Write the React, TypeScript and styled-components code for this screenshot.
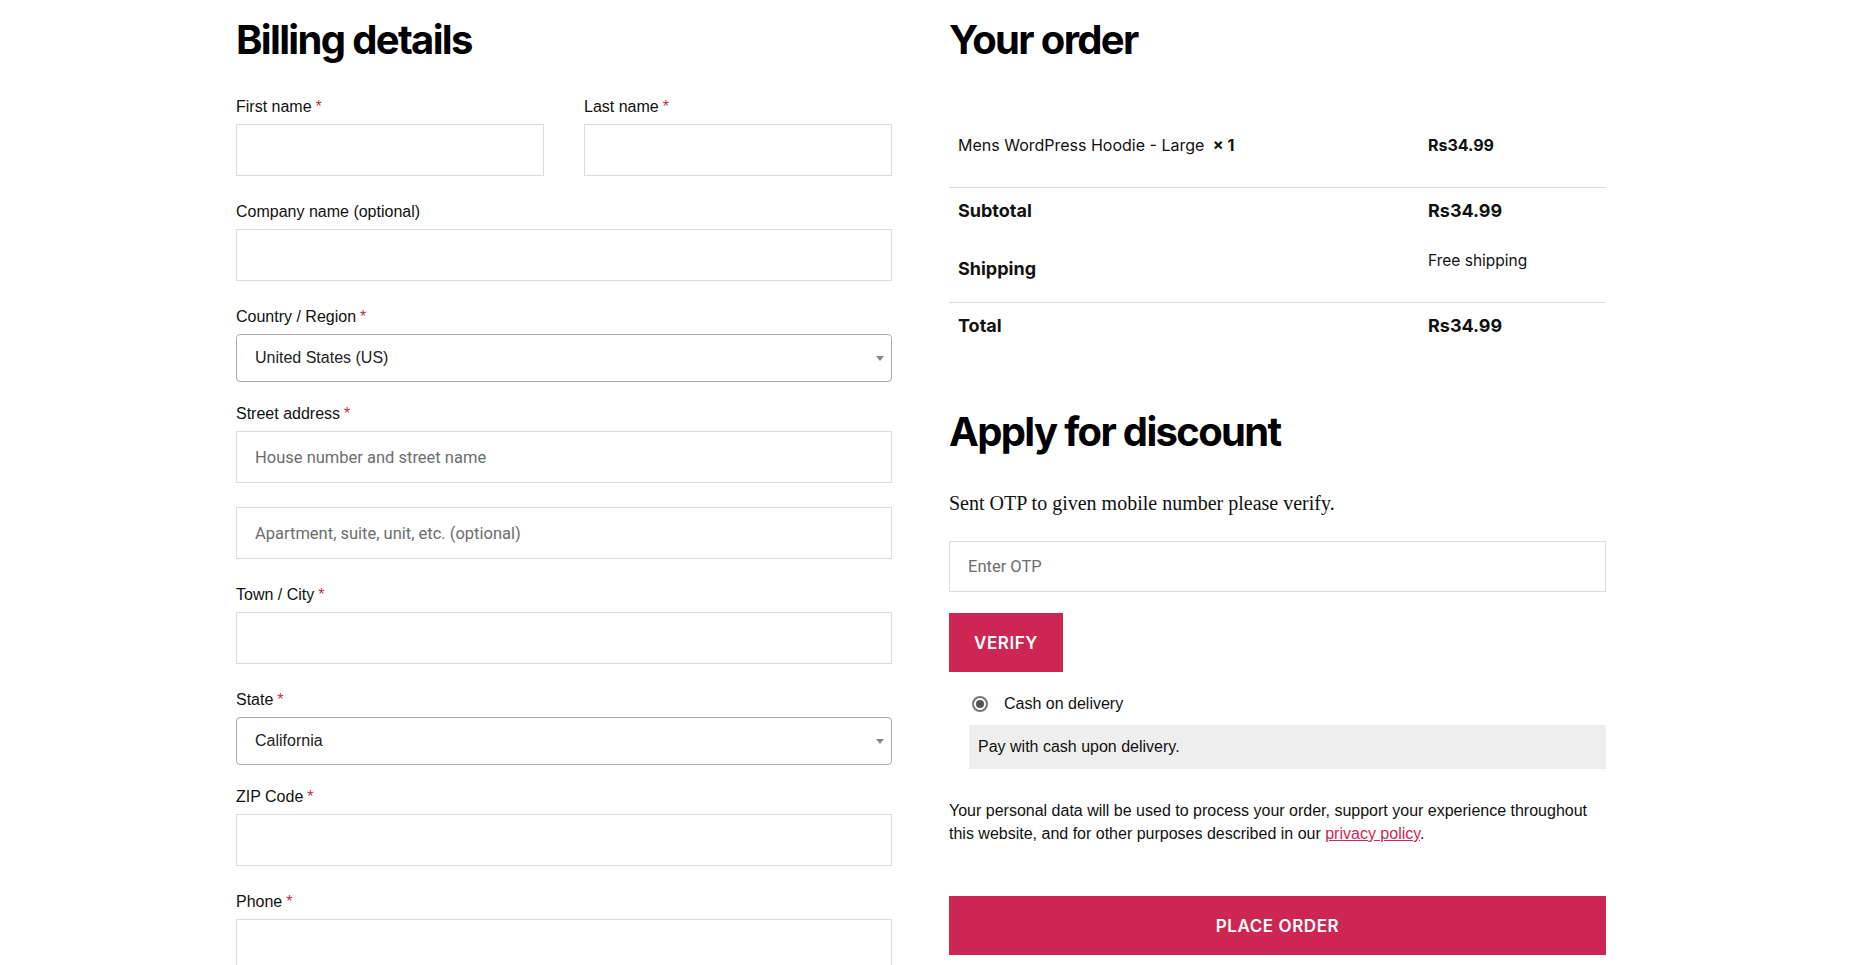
import React from "react";
import styled, { createGlobalStyle } from "styled-components";

const GlobalStyle = createGlobalStyle`
  html, body {
    margin: 0;
    padding: 0;
    background: #fff;
    overflow: hidden;
  }
  body {
    font-family: "Liberation Sans", Arial, sans-serif;
    color: #000;
  }
  * {
    box-sizing: border-box;
  }
`;

const ACCENT = "#cd2653";

const Page = styled.div`
  display: grid;
  grid-template-columns: 656px 657px;
  column-gap: 57px;
  align-items: start;
  padding: 16px 0 0 236px;
`;

const Column = styled.section`
  display: flex;
  flex-direction: column;
`;

const Heading = styled.h2<{ $top?: number }>`
  margin: ${(p) => p.$top || 0}px 0 0;
  font-family: Inter, "Liberation Sans", sans-serif;
  font-weight: 700;
  font-size: 40px;
  line-height: 48px;
  letter-spacing: -0.0415em;
  color: #000;
`;

const BillingForm = styled.div`
  margin-top: 31px;
`;

const NameGrid = styled.div`
  display: grid;
  grid-template-columns: 1fr 1fr;
  column-gap: 40px;
`;

const FieldRow = styled.div<{ $select?: boolean }>`
  margin-bottom: ${(p) => (p.$select ? 20 : 24)}px;
`;

const Label = styled.label`
  display: block;
  font-size: 16px;
  line-height: 24px;
  margin-bottom: 5px;
  color: #111;
`;

const Required = styled.span`
  color: #b3343f;
  margin-left: 4px;
`;

const TextField = styled.input<{ $stacked?: boolean }>`
  display: block;
  width: 100%;
  height: 52px;
  margin-top: ${(p) => (p.$stacked ? 24 : 0)}px;
  padding: 0 18px;
  border: 1px solid #dcdcdc;
  border-radius: 0;
  background: #fff;
  font-family: Roboto, "Liberation Sans", sans-serif;
  font-size: 16.5px;
  color: #111;
  outline: none;
  &::placeholder {
    color: #6d6d6d;
  }
`;

const SelectBox = styled.div`
  display: flex;
  align-items: center;
  justify-content: space-between;
  height: 48px;
  padding: 0 7px 0 18px;
  border: 1px solid #aaa;
  border-radius: 4px;
  font-size: 16px;
  color: #222;
`;

const Caret = styled.span`
  width: 0;
  height: 0;
  border-left: 4px solid transparent;
  border-right: 4px solid transparent;
  border-top: 5px solid #888;
`;

const OrderTable = styled.div`
  margin-top: 39px;
  font-family: Inter, "Liberation Sans", sans-serif;
  color: #111;
`;

const OrderRow = styled.div<{ $pad: string; $divider?: boolean; $height?: number }>`
  display: grid;
  grid-template-columns: 470px 1fr;
  padding: ${(p) => p.$pad};
  min-height: ${(p) => (p.$height ? `${p.$height}px` : "auto")};
  border-bottom: ${(p) => (p.$divider ? "1px solid #dcdcdc" : "none")};
  line-height: 24px;
`;

const Cell = styled.div<{ $bold?: boolean; $size?: number; $align?: string; $padTop?: number }>`
  padding: ${(p) => p.$padTop || 0}px 9px 0;
  font-size: ${(p) => p.$size || 16}px;
  font-weight: ${(p) => (p.$bold ? 700 : 400)};
  align-self: ${(p) => p.$align || "start"};
  white-space: nowrap;
`;

const Qty = styled.strong`
  font-weight: 700;
  margin-left: 4px;
`;

const OtpNote = styled.p`
  margin: 33px 0 0;
  font-family: "Liberation Serif", "Times New Roman", serif;
  font-size: 20px;
  line-height: 28px;
  color: #111;
`;

const OtpInput = styled(TextField)`
  height: 51px;
  margin-top: 24px;
`;

const Button = styled.button<{ $block?: boolean; $top: number }>`
  display: block;
  width: ${(p) => (p.$block ? "100%" : "auto")};
  height: 59px;
  margin-top: ${(p) => p.$top}px;
  padding: 0 25px;
  align-self: flex-start;
  border: none;
  background: ${ACCENT};
  color: #fff;
  font-family: Inter, "Liberation Sans", sans-serif;
  font-size: 17px;
  font-weight: 600;
  letter-spacing: 0.0333em;
  text-transform: uppercase;
  cursor: pointer;
`;

const PaymentOption = styled.label`
  display: flex;
  align-items: center;
  gap: 16px;
  margin-top: 20px;
  padding-left: 23px;
  font-size: 16px;
  line-height: 24px;
  color: #111;
`;

const Radio = styled.span`
  display: flex;
  align-items: center;
  justify-content: center;
  width: 16px;
  height: 16px;
  border-radius: 50%;
  border: 2px solid #767676;
  background: #fff;
  &::after {
    content: "";
    width: 8px;
    height: 8px;
    border-radius: 50%;
    background: #555;
  }
`;

const PayBox = styled.div`
  margin: 9px 0 0 20px;
  padding: 10px 9px;
  background: #eee;
  font-size: 16px;
  line-height: 24px;
  color: #111;
`;

const Privacy = styled.p`
  margin: 30px 0 0;
  font-size: 16px;
  line-height: 23px;
  color: #111;
`;

const PolicyLink = styled.a`
  color: ${ACCENT};
  text-decoration: underline;
`;

type Field = {
  label: string;
  required?: boolean;
  placeholder?: string;
  select?: string;
  extra?: string;
};

const fields: Field[] = [
  { label: "Company name (optional)" },
  { label: "Country / Region", required: true, select: "United States (US)" },
  {
    label: "Street address",
    required: true,
    placeholder: "House number and street name",
    extra: "Apartment, suite, unit, etc. (optional)",
  },
  { label: "Town / City", required: true },
  { label: "State", required: true, select: "California" },
  { label: "ZIP Code", required: true },
  { label: "Phone", required: true },
];

const FieldLabel = ({ label, required }: { label: string; required?: boolean }) => (
  <Label>
    {label}
    {required && <Required>*</Required>}
  </Label>
);

export default function App() {
  return (
    <>
      <GlobalStyle />
      <Page>
        <Column>
          <Heading>Billing details</Heading>
          <BillingForm>
            <NameGrid>
              <FieldRow>
                <FieldLabel label="First name" required />
                <TextField />
              </FieldRow>
              <FieldRow>
                <FieldLabel label="Last name" required />
                <TextField />
              </FieldRow>
            </NameGrid>
            {fields.map((f) => (
              <FieldRow key={f.label} $select={!!f.select}>
                <FieldLabel label={f.label} required={f.required} />
                {f.select ? (
                  <SelectBox>
                    <span>{f.select}</span>
                    <Caret />
                  </SelectBox>
                ) : (
                  <TextField placeholder={f.placeholder} />
                )}
                {f.extra && <TextField $stacked placeholder={f.extra} />}
              </FieldRow>
            ))}
          </BillingForm>
        </Column>

        <Column>
          <Heading>Your order</Heading>
          <OrderTable>
            <OrderRow $pad="30px 0" $divider>
              <Cell>
                Mens WordPress Hoodie - Large <Qty>× 1</Qty>
              </Cell>
              <Cell $bold>Rs34.99</Cell>
            </OrderRow>
            <OrderRow $pad="11px 0 12px">
              <Cell $bold $size={18}>Subtotal</Cell>
              <Cell $bold $size={18}>Rs34.99</Cell>
            </OrderRow>
            <OrderRow $pad="0" $height={68} $divider>
              <Cell $bold $size={18} $align="center">Shipping</Cell>
              <Cell $padTop={14} $size={15.5}>Free shipping</Cell>
            </OrderRow>
            <OrderRow $pad="11px 0 12px">
              <Cell $bold $size={18}>Total</Cell>
              <Cell $bold $size={18}>Rs34.99</Cell>
            </OrderRow>
          </OrderTable>

          <Heading $top={58}>Apply for discount</Heading>
          <OtpNote>Sent OTP to given mobile number please verify.</OtpNote>
          <OtpInput placeholder="Enter OTP" />
          <Button $top={21}>Verify</Button>

          <PaymentOption>
            <Radio />
            Cash on delivery
          </PaymentOption>
          <PayBox>Pay with cash upon delivery.</PayBox>

          <Privacy>
            Your personal data will be used to process your order, support your
            experience throughout this website, and for other purposes described in
            our <PolicyLink href="#privacy">privacy policy</PolicyLink>.
          </Privacy>
          <Button $block $top={51}>Place order</Button>
        </Column>
      </Page>
    </>
  );
}
